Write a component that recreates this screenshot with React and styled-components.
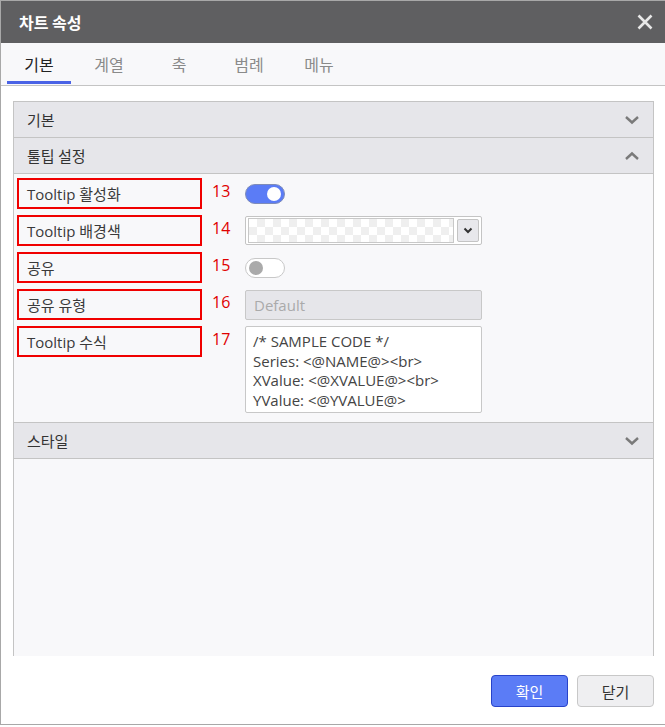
import React from 'react'
import styled, { createGlobalStyle } from 'styled-components'

const Global = createGlobalStyle`
html, body {
  margin: 0;
  padding: 0;
  background: #ffffff;
}
body {
  font-family: 'Open Sans', 'Noto Sans CJK KR', sans-serif;
  color: #333;
}
`

const Dialog = styled.div`
width: 665px;
height: 725px;
box-sizing: border-box;
border: 1px solid #a8a8a8;
border-right: none;
display: flex;
flex-direction: column;
background: #fff;
`

const Header = styled.div`
height: 42px;
flex-shrink: 0;
background: #5f5f61;
display: flex;
align-items: center;
justify-content: space-between;
padding: 0 11px 0 18px;
`

const Title = styled.h1`
margin: 0;
font-size: 16px;
font-weight: 700;
color: #fff;
font-family: 'Noto Sans CJK KR', sans-serif;
`

const Close = styled.button`
border: none;
background: none;
padding: 0;
width: 18px;
height: 18px;
display: flex;
cursor: pointer;
`

const Tabs = styled.div`
height: 42px;
flex-shrink: 0;
background: #f8f8fa;
border-bottom: 1px solid #c4c4c4;
display: flex;
align-items: stretch;
gap: 6px;
padding-left: 6px;
`

const Tab = styled.div`
width: 64px;
display: flex;
align-items: center;
justify-content: center;
font-size: 16px;
font-family: 'Noto Sans CJK KR', sans-serif;
color: ${p => (p.active ? '#222' : '#8a8a8a')};
border-bottom: 3px solid ${p => (p.active ? '#4a63e6' : 'transparent')};
box-sizing: border-box;
padding-top: 3px;
margin-bottom: 1px;
`

const Body = styled.div`
flex: 1;
overflow: hidden;
padding: 15px 11px 0 12px;
`

const Panel = styled.div`
border: 1px solid #c4c4c4;
border-bottom: none;
min-height: 100%;
box-sizing: border-box;
background: #f8f8fa;
`

const SectionHead = styled.div`
height: 35px;
background: #e6e6ea;
border-bottom: 1px solid #c4c4c4;
display: flex;
align-items: center;
justify-content: space-between;
padding: 0 13px 0 13px;
font-size: 15px;
font-family: 'Noto Sans CJK KR', sans-serif;
color: #333;
`

const SectionBody = styled.div`
padding: 4px 0 9px 3px;
display: flex;
flex-direction: column;
gap: 6px;
border-bottom: 1px solid #c4c4c4;
`

const Row = styled.div`
display: grid;
grid-template-columns: 185px 43px 237px;
align-items: start;
`

const Label = styled.div`
height: 31px;
box-sizing: border-box;
border: 2px solid #f00000;
display: flex;
align-items: center;
padding-left: 8px;
font-size: 15px;
color: #3a3a3a;
`

const Num = styled.div`
font-size: 16px;
color: #e00000;
padding-left: 10px;
line-height: 26px;
`

const Cell = styled.div`
display: flex;
align-items: center;
min-height: 31px;
`

const Toggle = styled.div`
width: 40px;
height: 20px;
box-sizing: border-box;
border-radius: 10px;
border: 1px solid ${p => (p.on ? '#7f8cb8' : '#c8c8c8')};
background: ${p => (p.on ? '#5b7cf6' : '#fff')};
display: flex;
align-items: center;
justify-content: ${p => (p.on ? 'flex-end' : 'flex-start')};
padding: 0 3px;
`

const Knob = styled.div`
width: 14px;
height: 14px;
border-radius: 50%;
background: ${p => (p.on ? '#fff' : '#aaa')};
`

const ColorBox = styled.div`
width: 237px;
height: 29px;
box-sizing: border-box;
border: 1px solid #c4c4c4;
border-radius: 2px;
background: #fff;
display: flex;
align-items: center;
padding: 2px;
gap: 3px;
`

const Checker = styled.div`
flex: 1;
height: 23px;
border: 1px solid #c8c8c8;
background-color: #fff;
background-image:
  linear-gradient(45deg, #efefef 25%, transparent 25%, transparent 75%, #efefef 75%),
  linear-gradient(45deg, #efefef 25%, transparent 25%, transparent 75%, #efefef 75%);
background-size: 16px 16px;
background-position: 0 0, 8px 8px;
`

const DropBtn = styled.div`
width: 22px;
height: 23px;
box-sizing: border-box;
border: 1px solid #c4c4c4;
border-radius: 2px;
background: #e8e8ec;
display: flex;
align-items: center;
justify-content: center;
`

const Disabled = styled.div`
width: 237px;
height: 30px;
box-sizing: border-box;
border: 1px solid #c8c8c8;
border-radius: 2px;
background: #e6e6ea;
color: #aaa;
font-size: 15px;
display: flex;
align-items: center;
padding-left: 8px;
`

const Code = styled.div`
width: 237px;
height: 87px;
box-sizing: border-box;
border: 1px solid #c8c8c8;
border-radius: 2px;
background: #fff;
color: #444;
font-size: 15px;
line-height: 19.6px;
padding: 5px 7px;
white-space: pre;
overflow: hidden;
`

const Footer = styled.div`
height: 66px;
flex-shrink: 0;
display: flex;
align-items: center;
justify-content: flex-end;
gap: 9px;
padding: 2px 11px 0 0;
`

const Button = styled.button`
width: 77px;
height: 32px;
border-radius: 4px;
font-size: 15px;
font-family: 'Noto Sans CJK KR', sans-serif;
border: 1px solid ${p => (p.primary ? '#2843c9' : '#c8c8c8')};
background: ${p => (p.primary ? '#5b7cf6' : '#efeff1')};
color: ${p => (p.primary ? '#fff' : '#333')};
`

const Chevron = ({ up }) => (
  <svg width="16" height="10" viewBox="0 0 16 10">
    <path d={up ? 'M2 8 L8 2.5 L14 8' : 'M2 2 L8 7.5 L14 2'} fill="none" stroke="#7a7a7a" strokeWidth="2.4" />
  </svg>
)

const tabs = ['기본', '계열', '축', '범례', '메뉴']

const rows = [
  { label: 'Tooltip 활성화', n: 13, kind: 'on' },
  { label: 'Tooltip 배경색', n: 14, kind: 'color' },
  { label: '공유', n: 15, kind: 'off' },
  { label: '공유 유형', n: 16, kind: 'select' },
  { label: 'Tooltip 수식', n: 17, kind: 'code' },
]

const code = `/* SAMPLE CODE */
Series: <@NAME@><br>
XValue: <@XVALUE@><br>
YValue: <@YVALUE@>`

const Control = ({ kind }) => {
  if (kind === 'on' || kind === 'off') {
    const on = kind === 'on'
    return (
      <Toggle on={on}>
        <Knob on={on} />
      </Toggle>
    )
  }
  if (kind === 'color') {
    return (
      <ColorBox>
        <Checker />
        <DropBtn>
          <svg width="10" height="7" viewBox="0 0 10 7">
            <path d="M1.5 1.5 L5 5 L8.5 1.5" fill="none" stroke="#333" strokeWidth="2" />
          </svg>
        </DropBtn>
      </ColorBox>
    )
  }
  if (kind === 'select') return <Disabled>Default</Disabled>
  return <Code>{code}</Code>
}

export default function App() {
  return (
    <>
      <Global />
      <Dialog>
        <Header>
          <Title>차트 속성</Title>
          <Close>
            <svg width="18" height="18" viewBox="0 0 18 18">
              <path d="M2.5 2.5 L15.5 15.5 M15.5 2.5 L2.5 15.5" stroke="#e8e8e8" strokeWidth="2.6" />
            </svg>
          </Close>
        </Header>
        <Tabs>
          {tabs.map((t, i) => (
            <Tab key={t} active={i === 0}>{t}</Tab>
          ))}
        </Tabs>
        <Body>
          <Panel>
            <SectionHead>
              기본
              <Chevron />
            </SectionHead>
            <SectionHead>
              툴팁 설정
              <Chevron up />
            </SectionHead>
            <SectionBody>
              {rows.map(r => (
                <Row key={r.n}>
                  <Label>{r.label}</Label>
                  <Num>{r.n}</Num>
                  <Cell>
                    <Control kind={r.kind} />
                  </Cell>
                </Row>
              ))}
            </SectionBody>
            <SectionHead>
              스타일
              <Chevron />
            </SectionHead>
          </Panel>
        </Body>
        <Footer>
          <Button primary>확인</Button>
          <Button>닫기</Button>
        </Footer>
      </Dialog>
    </>
  )
}
